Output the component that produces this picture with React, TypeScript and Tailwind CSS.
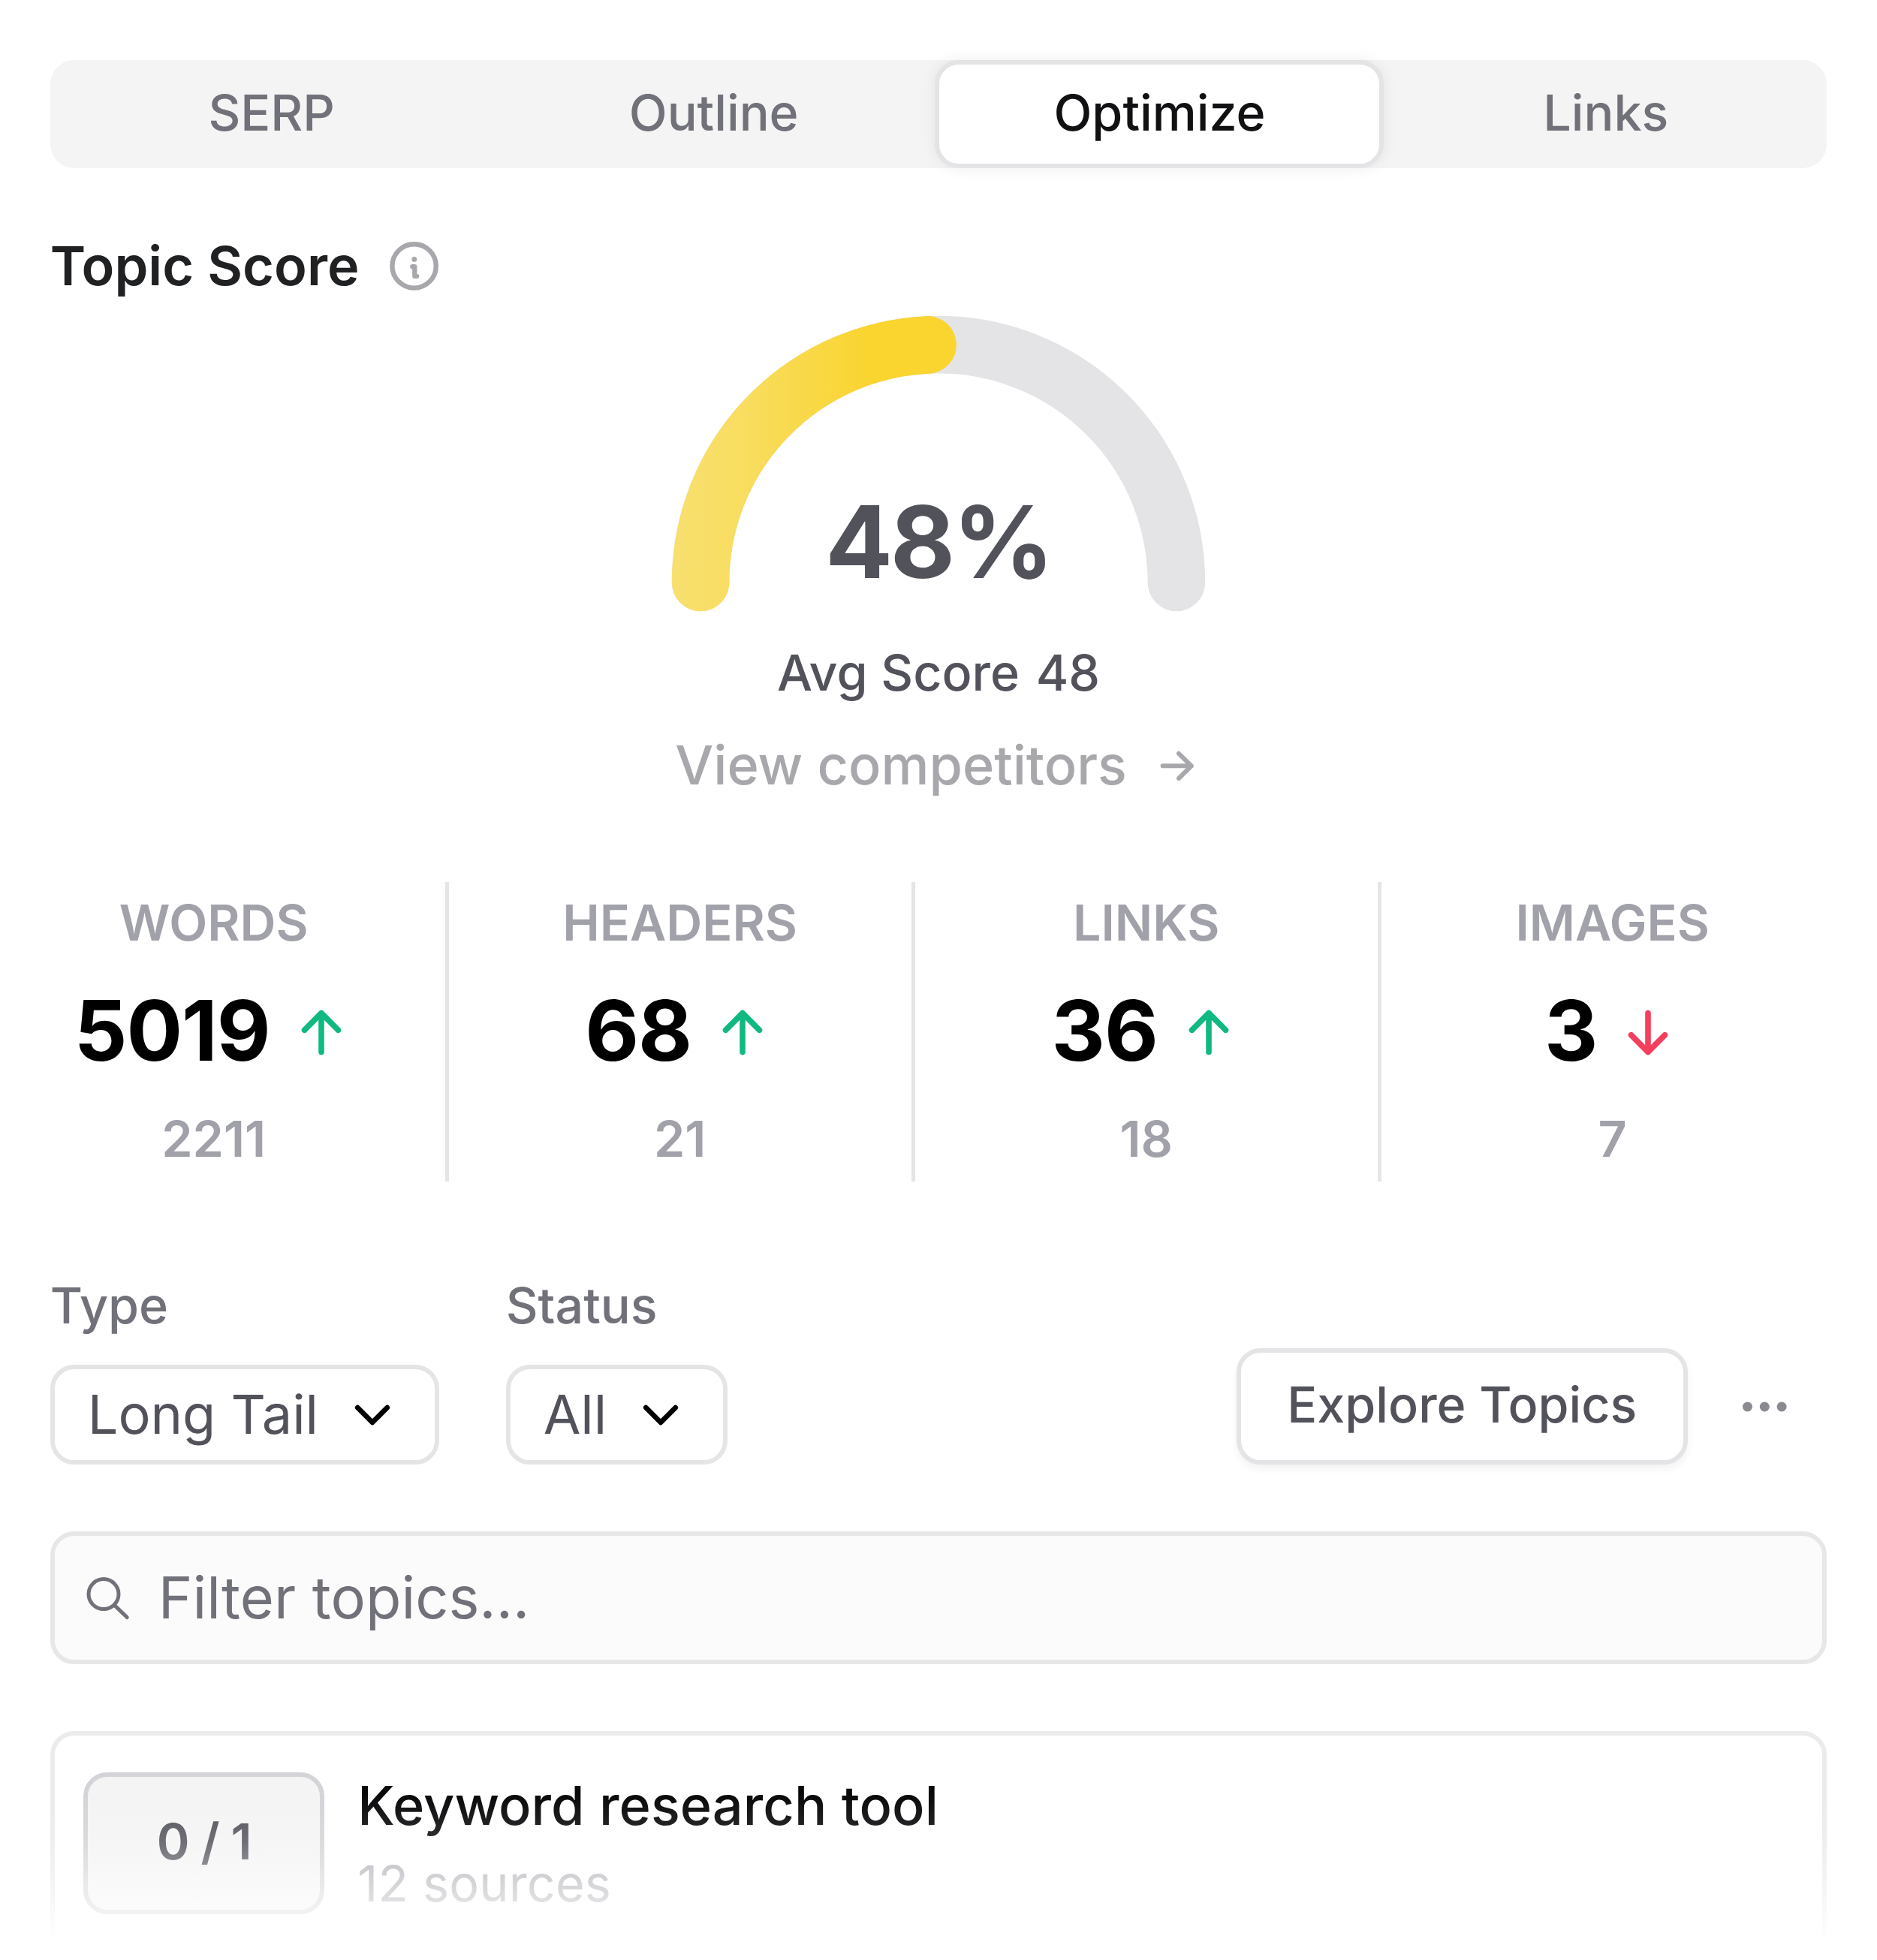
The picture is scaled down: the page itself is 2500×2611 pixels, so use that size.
import React from 'react';

type Stat = { label: string; value: string; target: string; up: boolean };

const stats: Stat[] = [
  { label: 'WORDS', value: '5019', target: '2211', up: true },
  { label: 'HEADERS', value: '68', target: '21', up: true },
  { label: 'LINKS', value: '36', target: '18', up: true },
  { label: 'IMAGES', value: '3', target: '7', up: false },
];

const tabs = [
  { label: 'SERP', box: 'w-[589px]' },
  { label: 'Outline', box: 'w-[589px]' },
  { label: 'Optimize', box: 'w-[598.5px]' },
  { label: 'Links', box: 'flex-1' },
];

function Tabs() {
  return (
    <div className="flex h-[144px] shrink-0 rounded-[32px] bg-[#f4f4f4] text-[66.4px] font-medium">
      {tabs.map((t) => (
        <button
          key={t.label}
          className={
            t.label === 'Optimize'
              ? `${t.box} flex items-center justify-center rounded-[32px] border-[6px] border-[#e4e4e7] bg-white pb-[2px] pl-[1px] text-[#111113] shadow-[0_0_20px_rgba(0,0,0,0.07)]`
              : `${t.box} flex items-center justify-center pb-[2px] pl-[1px] text-[#71717a]`
          }
        >
          {t.label}
        </button>
      ))}
    </div>
  );
}

function InfoIcon() {
  return (
    <svg width="66" height="66" viewBox="0 0 66 66" fill="none" stroke="#a8a8ac" strokeLinecap="round" strokeLinejoin="round">
      <circle cx="32.6" cy="33.4" r="29.2" strokeWidth="6.4" />
      <circle cx="32.8" cy="24.4" r="3.4" fill="#a8a8ac" stroke="none" />
      <path d="M30.2 34.1H33.3V47H36.2" strokeWidth="6.2" />
    </svg>
  );
}

function Gauge() {
  return (
    <div className="relative mx-auto mt-[25px] h-[396px] w-[712px] shrink-0">
      <svg width="712" height="396" viewBox="0 0 712 396" fill="none" strokeLinecap="round" strokeWidth="76.6">
        <defs>
          <linearGradient id="score" gradientUnits="userSpaceOnUse" x1="0" y1="0" x2="280" y2="0">
            <stop offset="0" stopColor="#f8e070" />
            <stop offset="0.35" stopColor="#f8dd5f" />
            <stop offset="0.95" stopColor="#fad42f" />
          </linearGradient>
        </defs>
        <path d="M39.1 356A316.9 316.9 0 0 1 672.9 356" stroke="#e4e4e6" />
        <path d="M39.1 356A316.9 316.9 0 0 1 341.6 39.4" stroke="url(#score)" />
      </svg>
      <div className="absolute inset-x-0 top-[222px] text-center text-[132.9px] leading-[160px] font-bold tracking-[-0.025em] text-[#52525b]">48%</div>
    </div>
  );
}

function TrendArrow({ up }: { up: boolean }) {
  return (
    <svg width="78" height="78" viewBox="0 0 78 78" fill="none" strokeWidth="7.6" strokeLinecap="round" strokeLinejoin="round" stroke={up ? '#10b981' : '#f43f5e'}>
      {up ? <path d="M39 65.5V13.5M16.5 36.2L39 13.5L61.5 36.2" /> : <path d="M39 13.5V65.5M16.5 42.8L39 65.5L61.5 42.8" />}
    </svg>
  );
}

function Stats() {
  return (
    <div className="mt-[113px] -mr-[27px] -ml-[90px] flex h-[399px] shrink-0 font-semibold">
      {stats.map((s, i) => (
        <div
          key={s.label}
          className={
            i === 3
              ? 'flex w-[621px] shrink-0 flex-col items-center border-r-[5px] border-transparent pt-[13.5px]'
              : 'flex w-[621px] shrink-0 flex-col items-center border-r-[5px] border-[#e5e5e5] pt-[13.5px]'
          }
        >
          <div className="h-[80px] text-[66.4px] leading-[80px] text-[#a1a1aa]">{s.label}</div>
          <div className="mt-[38px] flex h-[133px] items-center gap-[29px] pr-[4px]">
            <span className="text-[110.7px] leading-[133px] font-bold tracking-[-1px] text-black">{s.value}</span>
            <span className="mt-[3px]">
              <TrendArrow up={s.up} />
            </span>
          </div>
          <div className="mt-[37px] h-[80px] text-[66.4px] leading-[80px] text-[#a1a1aa]">{s.target}</div>
        </div>
      ))}
    </div>
  );
}

function Select({ label, value, box }: { label: string; value: string; box: string }) {
  return (
    <div className="flex flex-col">
      <span className="text-[66.4px] leading-[80px] font-medium text-[#71717a]">{label}</span>
      <button className={`${box} mt-[39px] flex h-[133px] items-center justify-between rounded-[32px] border-[6px] border-[#e5e5e6] bg-white pr-[50px] pb-[2px] pl-[44px] text-[72px] leading-[86px] text-[#52525b]`}>
        {value}
        <svg width="66" height="66" viewBox="0 0 66 66" fill="none" stroke="#000" strokeWidth="6.8" strokeLinecap="round" strokeLinejoin="round">
          <path d="M13.3 24.2L33 43.8L52.7 24.2" />
        </svg>
      </button>
    </div>
  );
}

function Filters() {
  return (
    <div className="mt-[125px] flex shrink-0 items-end">
      <Select label="Type" value="Long Tail" box="w-[518.5px]" />
      <div className="w-[88.5px]" />
      <Select label="Status" value="All" box="w-[295.5px]" />
      <button className="ml-auto flex h-[155px] w-[601px] items-center justify-center rounded-[32px] border-[6px] border-[#e4e4e7] bg-white pb-[3px] text-[66.4px] font-medium text-[#52525b] shadow-[0_6px_11px_rgba(0,0,0,0.05)]">
        Explore Topics
      </button>
      <svg className="mr-[50px] mb-[44.5px] ml-[69.5px]" width="66" height="66" viewBox="0 0 66 66" fill="#8a8a90">
        <circle cx="10.5" cy="33" r="6.5" />
        <circle cx="33.3" cy="33" r="6.5" />
        <circle cx="56.1" cy="33" r="6.5" />
      </svg>
    </div>
  );
}

function FilterInput() {
  return (
    <div className="mt-[89px] flex h-[177px] shrink-0 items-center gap-[34.5px] rounded-[32px] border-[6px] border-[#e7e7e8] bg-[#fbfbfb] pl-[37.5px] text-[77.5px] text-[#71717a]">
      <svg width="66" height="66" viewBox="0 0 66 66" fill="none" stroke="#71717a" strokeWidth="5" strokeLinecap="round">
        <circle cx="28" cy="27.6" r="20" />
        <path d="M42.7 42.6L59.2 58.5" />
      </svg>
      <span>Filter topics...</span>
    </div>
  );
}

function TopicCard() {
  return (
    <div className="mt-[89px] flex h-[400px] shrink-0 items-start gap-[44px] rounded-[32px] border-[6px] border-[#ebebec] bg-white pt-[49px] pl-[38.5px]">
      <div className="flex h-[188.5px] w-[321px] items-center justify-center rounded-[32px] border-[6px] border-[#d4d4d8] bg-[#f4f4f5] pb-[2px] text-[66.4px] font-semibold tracking-[-0.9px] text-[#52525b]">
        0 / 1
      </div>
      <div className="flex flex-col">
        <span className="text-[72px] leading-[88px] font-medium tracking-[0.08px] text-[#09090b]">Keyword research tool</span>
        <span className="mt-[20px] text-[66.4px] leading-[80px] tracking-[0.2px] text-[#afafb6]">12 sources</span>
      </div>
    </div>
  );
}

export default function App() {
  return (
    <div className="relative flex h-[2611px] w-[2500px] flex-col overflow-hidden bg-white px-[66.7px] pt-[80px] font-['Inter',sans-serif]">
      <Tabs />
      <div className="mt-[88px] flex h-[83px] shrink-0 items-center gap-[41px] text-[72px] leading-[83px] font-semibold text-[#202123]">
        Topic Score
        <InfoIcon />
      </div>
      <Gauge />
      <div className="mt-[40px] flex h-[80px] shrink-0 items-center justify-center text-[66.4px] leading-[80px] font-medium whitespace-pre text-[#52525b]">
        <span>Avg Score </span>
        <span className="ml-[4px]">48</span>
      </div>
      <div className="mt-[40px] flex h-[86px] shrink-0 items-center justify-center gap-[34px] text-[72px] leading-[86px] font-medium text-[#a8a8ac]">
        View competitors
        <svg width="66" height="66" viewBox="0 0 66 66" fill="none" stroke="#a8a8ac" strokeWidth="6" strokeLinecap="round" strokeLinejoin="round">
          <path d="M13.6 34.3H51.8M35 17.8L51.8 34.3L35 50.8" />
        </svg>
      </div>
      <Stats />
      <Filters />
      <FilterInput />
      <TopicCard />
      {/* Fades the list out towards the bottom edge */}
      <div className="absolute inset-x-0 bottom-0 h-[221px] bg-[linear-gradient(to_bottom,rgba(255,255,255,0)_0px,rgba(255,255,255,0.1)_41px,rgba(255,255,255,0.17)_65px,rgba(255,255,255,0.31)_90px,rgba(255,255,255,0.7)_157px,rgba(255,255,255,1)_198px)]" />
    </div>
  );
}
